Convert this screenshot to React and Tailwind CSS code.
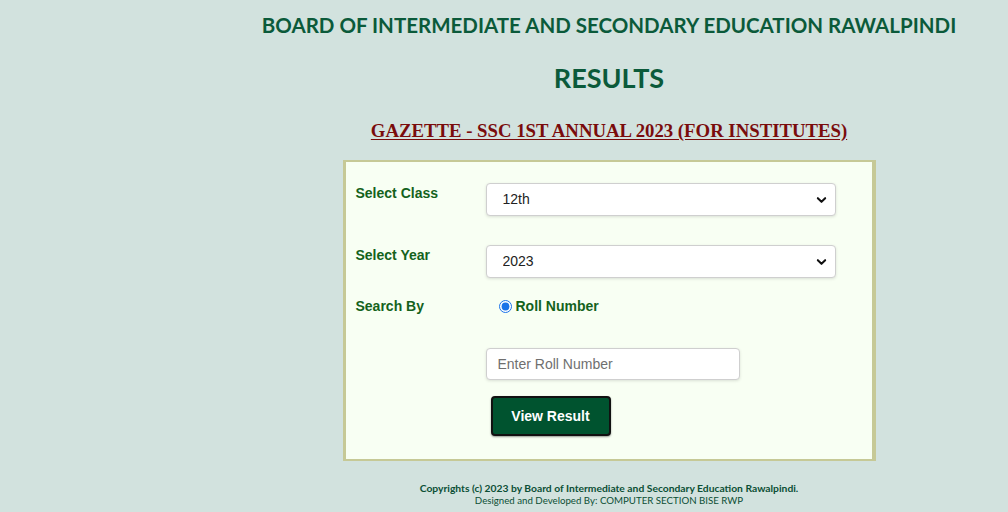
import React, { useState } from 'react';

// Chevron drawn for the select boxes
const Chevron = () => (
    <svg className="pointer-events-none absolute right-[9px] top-1/2 -translate-y-1/2 w-[11px] h-[11px]" viewBox="0 0 12 12">
        <path d="M2 4 L6 8 L10 4" fill="none" stroke="#111" strokeWidth="2.2" strokeLinecap="round" strokeLinejoin="round" />
    </svg>
);

const SelectBox = ({ value, onChange, options }) => (
    <div className="relative w-[350px] h-[33px]">
        <select
            value={value}
            onChange={e => onChange(e.target.value)}
            className="appearance-none w-full h-full bg-white border border-[#cfcfcf] rounded-[4px] shadow-[0_1px_3px_rgba(0,0,0,0.12)] pl-[16px] text-[14px] text-[#222] outline-none"
            style={{ fontFamily: '"Liberation Sans", Arial, sans-serif' }}
        >
            {options.map(o => <option key={o} value={o}>{o}</option>)}
        </select>
        <Chevron />
    </div>
);

const labelClass = "w-[130px] shrink-0 text-[14px] leading-[16px] font-bold text-[#14621c]";

export default function App() {
    const [cls, setCls] = useState('12th');
    const [year, setYear] = useState('2023');
    const [roll, setRoll] = useState('');

    return (
        <div className="min-h-screen w-full bg-[#d2e2de] flex" style={{ fontFamily: '"Liberation Sans", Arial, sans-serif' }}>
            {/* empty left column */}
            <div className="w-[210px] shrink-0" />

            <div className="flex-1 flex flex-col items-center">
                <h1 className="mt-[12px] text-[20.5px] leading-[26px] font-bold text-[#0b5a3a] whitespace-nowrap" style={{ fontFamily: 'Lato, "Open Sans", sans-serif' }}>
                    BOARD OF INTERMEDIATE AND SECONDARY EDUCATION RAWALPINDI
                </h1>
                <h2 className="mt-[24px] text-[27px] leading-[32px] font-bold text-[#0b5a3a]" style={{ fontFamily: 'Lato, "Open Sans", sans-serif' }}>
                    RESULTS
                </h2>
                <h3 className="mt-[26px] text-[18.75px] leading-[22px] font-bold text-[#7a0c0c] underline underline-offset-[2px]" style={{ fontFamily: '"Liberation Serif", "Times New Roman", serif' }}>
                    GAZETTE - SSC 1ST ANNUAL 2023 (FOR INSTITUTES)
                </h3>

                {/* form panel */}
                <div className="mt-[18px] w-[533px] bg-[#f8fff3] border-[#c6c996] border-l-[3px] border-r-[4px] border-t-[2px] border-b-[2px] pl-[10px] pt-[21px] pb-[23px]">
                    <div className="flex items-start">
                        <div className={`${labelClass} pt-[2px]`}>Select Class</div>
                        <SelectBox value={cls} onChange={setCls} options={['9th', '10th', '11th', '12th']} />
                    </div>

                    <div className="flex items-start mt-[29px]">
                        <div className={`${labelClass} pt-[2px]`}>Select Year</div>
                        <SelectBox value={year} onChange={setYear} options={['2021', '2022', '2023']} />
                    </div>

                    <div className="flex items-center mt-[16px]">
                        <div className={labelClass}>Search By</div>
                        <label className="flex items-center ml-[13px] mt-[2px] text-[14px] font-bold text-[#14621c]">
                            <input type="radio" defaultChecked name="searchBy" className="w-[13px] h-[13px] mr-[4px] accent-[#1a73e8]" />
                            Roll Number
                        </label>
                    </div>

                    <div className="ml-[130px] mt-[31px]">
                        <input
                            value={roll}
                            onChange={e => setRoll(e.target.value)}
                            placeholder="Enter Roll Number"
                            className="w-[254px] h-[32px] bg-white border border-[#cfcfcf] rounded-[4px] shadow-[0_1px_3px_rgba(0,0,0,0.12)] px-[11px] text-[14px] text-[#222] placeholder-[#6f6f6f] outline-none"
                        />
                    </div>

                    <div className="ml-[135px] mt-[16px]">
                        <button className="w-[120px] h-[40px] bg-[#00532f] border-2 border-[#111] rounded-[4px] text-white text-[14px] font-bold shadow-[0_1px_2px_rgba(0,0,0,0.4)]">
                            View Result
                        </button>
                    </div>
                </div>

                {/* footer */}
                <div className="mt-[21px] text-center text-[#0b4f35] text-[10px] leading-[12px]" style={{ fontFamily: 'Lato, "Open Sans", sans-serif' }}>
                    <p className="font-bold text-[10.3px]">Copyrights (c) 2023 by Board of Intermediate and Secondary Education Rawalpindi.</p>
                    <p className="text-[9.7px]">Designed and Developed By: COMPUTER SECTION BISE RWP</p>
                </div>
            </div>
        </div>
    );
}
